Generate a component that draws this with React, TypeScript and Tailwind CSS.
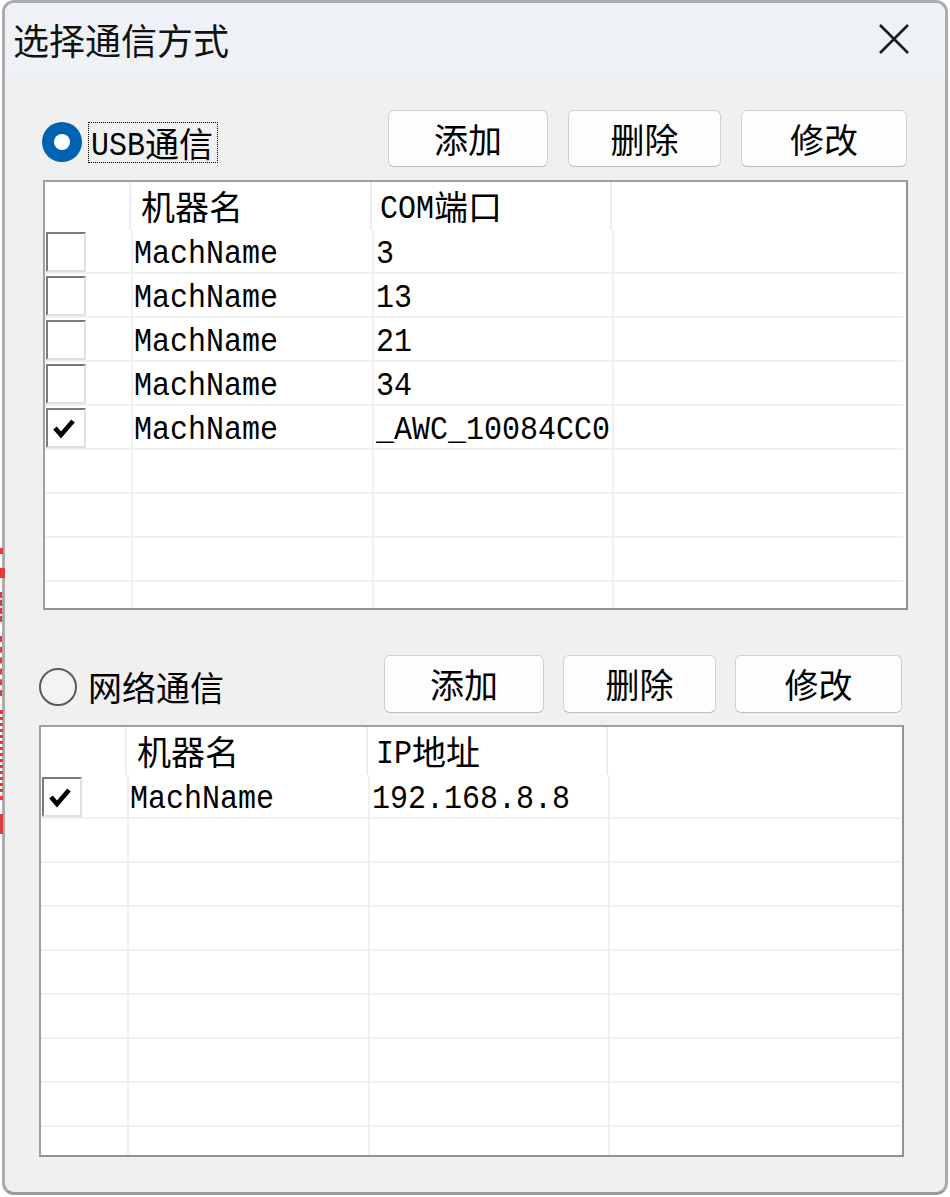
const cjk = "font-['Noto_Sans_CJK_SC',sans-serif] text-[34px]";
const lat = "inline-block font-['Liberation_Mono',monospace] text-[30px] translate-y-[3px] scale-y-[1.12]";

function Mixed({ text }: { text: string }) {
  const parts = text.match(/[\x00-\x7f]+|[^\x00-\x7f]+/g) ?? [];
  return (
    <span className="inline-flex items-center leading-none whitespace-pre text-black">
      {parts.map((p, i) => (
        <span key={i} className={/^[\x00-\x7f]/.test(p) ? lat : cjk}>
          {p}
        </span>
      ))}
    </span>
  );
}

function Check({ on }: { on?: boolean }) {
  return (
    <div className="w-10 h-10 border-2 border-t-[#7a7a7a] border-l-[#7a7a7a] border-r-[#e0e0e0] border-b-[#e0e0e0] bg-white relative">
      {on && (
        <svg className="absolute left-[5px] top-[8px]" width="22" height="22" viewBox="0 0 22 22">
          <path d="M2 10 L8 17 L20 3" stroke="#000" strokeWidth="4.6" fill="none" strokeLinejoin="miter" />
        </svg>
      )}
    </div>
  );
}

type Row = { name: string; val: string; on?: boolean };

function Grid({ col3, rows, count, height }: { col3: string; rows: Row[]; count: number; height: string }) {
  const lines = Array.from({ length: count }, (_, i) => rows[i]);
  return (
    <div className={`w-[865px] ${height} border-2 border-t-[#a0a0a0] border-l-[#a0a0a0] border-r-[#8e939b] border-b-[#8e939b] bg-white overflow-hidden`}>
      <div className="flex h-[48px]">
        <div className="w-[86px] shrink-0 border-r-2 border-[#ececec]" />
        <div className="w-[241px] shrink-0 border-r-2 border-[#ececec] flex items-center pl-[10px]">
          <Mixed text="机器名" />
        </div>
        <div className="w-[240px] shrink-0 border-r-2 border-[#ececec] flex items-center pl-[8px]">
          <Mixed text={col3} />
        </div>
        <div className="flex-1" />
      </div>
      {lines.map((r, i) => (
        <div key={i} className="flex h-[44px] border-b-2 border-[#f0f0f0] mr-[3px]">
          <div className="w-[88px] shrink-0 border-r-2 border-[#f0f0f0] pl-[1px] pt-[2px]">
            {r && <Check on={r.on} />}
          </div>
          <div className="w-[241px] shrink-0 border-r-2 border-[#f0f0f0] flex items-center pl-[1px]">
            {r && <Mixed text={r.name} />}
          </div>
          <div className="w-[240px] shrink-0 border-r-2 border-[#f0f0f0] flex items-center pl-[2px]">
            {r && <Mixed text={r.val} />}
          </div>
          <div className="flex-1" />
        </div>
      ))}
    </div>
  );
}

function Btn({ label, w }: { label: string; w: string }) {
  return (
    <div className={`${w} h-full rounded-[6px] border border-[#d0d0d0] border-b-[#bdbdbd] bg-[#fdfdfd] flex items-center justify-center`}>
      <Mixed text={label} />
    </div>
  );
}

export default function App() {
  const usb: Row[] = [
    { name: "MachName", val: "3" },
    { name: "MachName", val: "13" },
    { name: "MachName", val: "21" },
    { name: "MachName", val: "34" },
    { name: "MachName", val: "_AWC_10084CC0", on: true },
  ];
  const net: Row[] = [{ name: "MachName", val: "192.168.8.8", on: true }];

  return (
    <div className="w-[950px] h-[1197px] bg-white relative overflow-hidden">
      <div className="absolute left-0 top-[548px] w-[5px] h-[310px] flex flex-col items-start gap-[14px] z-10">
        <div className="w-[3px] h-[6px] bg-[#e23b3b]" />
        <div className="w-[5px] h-[10px] bg-[#e23b3b]" />
        <div className="w-[3px] h-[30px] border-l-2 border-dashed border-[#e23b3b]" />
        <div className="w-[4px] h-[60px] border-l-2 border-dashed border-[#e23b3b]" />
        <div className="w-[4px] h-[90px] border-l-[3px] border-dotted border-[#e23b3b]" />
        <div className="w-[3px] h-[20px] bg-[#e23b3b]" />
      </div>

      <div className="ml-[2px] w-[946px] h-[1195px] border-[3px] border-[#ababab] border-b-[#9a9a9a] rounded-[12px] overflow-hidden bg-[#f0f0f0] flex flex-col">
        <div className="h-[72px] shrink-0 bg-[#eef2f6] flex items-center pl-[8px] pr-[35px]">
          <span className="font-['Noto_Sans_CJK_SC',sans-serif] text-[36px] leading-none text-[#111]">选择通信方式</span>
          <svg className="ml-auto" width="32" height="32" viewBox="0 0 32 32">
            <path d="M2 2 L30 30 M30 2 L2 30" stroke="#1a1a1a" strokeWidth="2.6" fill="none" />
          </svg>
        </div>

        <div className="flex h-[57px] mt-[35px] pl-[37px] pr-[38px]">
          <div className="w-10 h-10 mt-[12px] rounded-full bg-[#0063b1] flex items-center justify-center">
            <div className="w-4 h-4 rounded-full bg-white" />
          </div>
          <div className="ml-[6px] mt-[12px] h-[41px] w-[130px] border border-dotted border-black flex items-center pl-[2px]">
            <Mixed text="USB通信" />
          </div>
          <div className="ml-auto flex gap-[20px] h-full">
            <Btn label="添加" w="w-[160px]" />
            <Btn label="删除" w="w-[153px]" />
            <Btn label="修改" w="w-[166px]" />
          </div>
        </div>

        <div className="mt-[13px] ml-[38px]">
          <Grid col3="COM端口" rows={usb} count={9} height="h-[430px]" />
        </div>

        <div className="flex h-[58px] mt-[45px] pl-[34px] pr-[43px]">
          <div className="w-[38px] h-[38px] mt-[13px] rounded-full border-2 border-[#5a5a5a] bg-[#f3f3f3]" />
          <div className="ml-[11px] mt-[13px] h-[38px] flex items-center">
            <Mixed text="网络通信" />
          </div>
          <div className="ml-auto flex gap-[19px] h-full">
            <Btn label="添加" w="w-[160px]" />
            <Btn label="删除" w="w-[153px]" />
            <Btn label="修改" w="w-[167px]" />
          </div>
        </div>

        <div className="mt-[12px] ml-[34px]">
          <Grid col3="IP地址" rows={net} count={9} height="h-[432px]" />
        </div>
      </div>
    </div>
  );
}
